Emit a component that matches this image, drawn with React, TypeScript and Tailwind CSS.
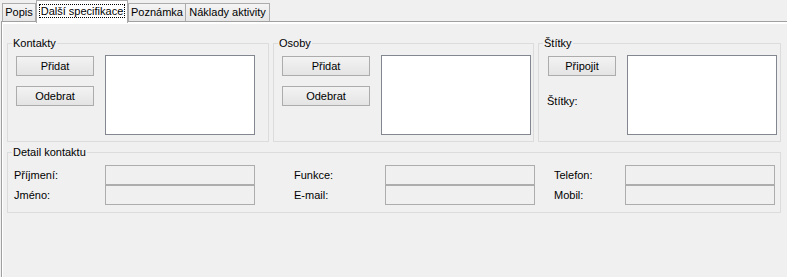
const Button = ({ label, width }: { label: string; width: string }) => (
  <button
    type="button"
    className={`${width} h-[20px] border border-[#acacac] bg-gradient-to-b from-[#f3f3f3] to-[#e4e4e4] text-black flex items-center justify-center leading-none`}
  >
    {label}
  </button>
);

const ListBox = () => <div className="w-[150px] h-[80px] border border-[#828790] bg-white" />;

const Field = () => <div className="w-[150px] h-[20px] border border-[#adadad] bg-[#f0f0f0]" />;

const Group = ({
  title,
  width,
  className = "",
  children,
}: {
  title: string;
  width: string;
  className?: string;
  children: React.ReactNode;
}) => (
  <fieldset className={`${width} ${className} border border-[#dcdcdc] pl-[4px] pt-[5px] pb-[6px] min-w-0`}>
    <legend className="px-[1px] leading-[14px]">{title}</legend>
    {children}
  </fieldset>
);

const DetailRow = ({ labels }: { labels: [string, string, string] }) => (
  <div className="flex items-center h-[20px]">
    <span className="ml-[2px] w-[91px]">{labels[0]}</span>
    <Field />
    <span className="ml-[39px] w-[91px]">{labels[1]}</span>
    <Field />
    <span className="ml-[19px] w-[71px]">{labels[2]}</span>
    <Field />
  </div>
);

const App = () => {
  const tabBase = "h-[18px] border border-b-0 border-[#acacac] bg-gradient-to-b from-[#f4f4f4] to-[#e6e6e6] flex items-center justify-center";

  return (
    <div className="w-[787px] h-[277px] overflow-hidden bg-[#f0f0f0] text-black text-[11px] font-['Liberation_Sans',Arial,sans-serif] flex flex-col">
      <div className="flex items-end h-[21px] pl-[2px] shrink-0">
        <div className={`${tabBase} w-[34px]`}>Popis</div>
        <div className="relative z-10 -mb-[2px] h-[23px] w-[92px] border border-b-0 border-[#acacac] bg-white flex items-center justify-center pb-[3px]">
          <span className="outline-1 outline-dotted outline-black px-[1px] leading-[12px]">Další specifikace</span>
        </div>
        <div className={`${tabBase} w-[58px]`}>Poznámka</div>
        <div className={`${tabBase} w-[84px] border-l-0`}>Náklady aktivity</div>
      </div>

      <div className="flex-1 ml-px border-l border-t border-[#a0a0a0] shadow-[inset_1px_2px_0_#fff] pt-[14px] pl-[5px]">
        <div className="flex">
          <Group title="Kontakty" width="w-[262px]">
            <div className="flex">
              <div className="w-[93px] pt-px flex flex-col">
                <div className="ml-[4px]">
                  <Button label="Přidat" width="w-[78px]" />
                </div>
                <div className="ml-[4px] mt-[10px]">
                  <Button label="Odebrat" width="w-[78px]" />
                </div>
              </div>
              <ListBox />
            </div>
          </Group>

          <Group title="Osoby" width="w-[261px]" className="ml-[4px]">
            <div className="flex">
              <div className="w-[103px] pt-px flex flex-col">
                <div className="ml-[4px]">
                  <Button label="Přidat" width="w-[88px]" />
                </div>
                <div className="ml-[4px] mt-[10px]">
                  <Button label="Odebrat" width="w-[88px]" />
                </div>
              </div>
              <ListBox />
            </div>
          </Group>

          <Group title="Štítky" width="w-[243px]" className="ml-[4px]">
            <div className="flex">
              <div className="w-[84px] pt-px flex flex-col">
                <div className="ml-[5px]">
                  <Button label="Připojit" width="w-[68px]" />
                </div>
                <span className="ml-[4px] mt-[18px] leading-[14px]">Štítky:</span>
              </div>
              <ListBox />
            </div>
          </Group>
        </div>

        <fieldset className="mt-[3px] w-[774px] border border-[#dcdcdc] pl-[4px] pt-[6px] pb-[7px] min-w-0">
          <legend className="px-[1px] leading-[14px]">Detail kontaktu</legend>
          <DetailRow labels={["Příjmení:", "Funkce:", "Telefon:"]} />
          <DetailRow labels={["Jméno:", "E-mail:", "Mobil:"]} />
        </fieldset>
      </div>
    </div>
  );
};

export default App;
